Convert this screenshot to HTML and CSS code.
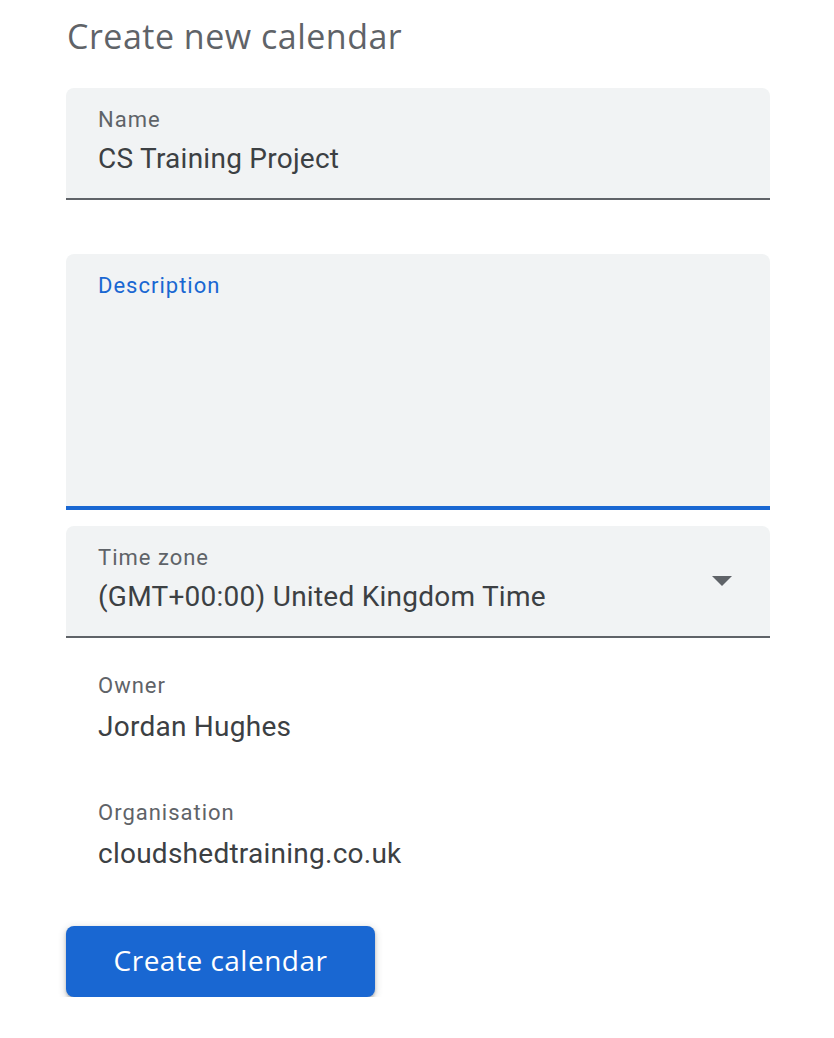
FILE: index.html
```html
<!DOCTYPE html>
<html lang="en">
<head>
<meta charset="utf-8">
<title>Create new calendar</title>
<link rel="stylesheet" href="styles.css">
</head>
<body>
<main class="page">
  <h1 class="title">Create new calendar</h1>

  <div class="field field-name">
    <div class="label">Name</div>
    <div class="value">CS Training Project</div>
  </div>

  <div class="field field-desc">
    <div class="label label-focus">Description</div>
    <div class="desc-area"></div>
  </div>

  <div class="field field-tz">
    <div class="tz-text">
      <div class="label">Time zone</div>
      <div class="value">(GMT+00:00) United Kingdom Time</div>
    </div>
    <svg class="caret" width="20" height="10" viewBox="0 0 20 10" aria-hidden="true"><path d="M0 0 L20 0 L10 10 Z" fill="#5f6368"/></svg>
  </div>

  <div class="info info-owner">
    <div class="label">Owner</div>
    <div class="value">Jordan Hughes</div>
  </div>

  <div class="info info-org">
    <div class="label">Organisation</div>
    <div class="value">cloudshedtraining.co.uk</div>
  </div>

  <button class="btn" type="button">Create calendar</button>
</main>
</body>
</html>
```

FILE: styles.css
```css
html, body {
  margin: 0;
  padding: 0;
  background: #ffffff;
}

.page {
  width: 704px;
  padding: 16px 0 0 66px;
  display: flex;
  flex-direction: column;
  align-items: flex-start;
  font-family: Roboto, "Liberation Sans", Arial, sans-serif;
}

.title {
  margin: 0 0 32px 1px;
  font-family: "Open Sans", Roboto, sans-serif;
  font-weight: 400;
  font-size: 34px;
  line-height: 40px;
  color: #5f6368;
  letter-spacing: 0.5px;
}

.field {
  box-sizing: border-box;
  width: 704px;
  background: #f1f3f4;
  border-radius: 8px 8px 0 0;
  border-bottom: 2px solid #5f6368;
  padding: 20px 32px 21px 32px;
}

.label {
  font-size: 22px;
  line-height: 24px;
  letter-spacing: 1px;
  color: #5f6368;
  margin-bottom: 9px;
}

.label-focus {
  color: #1967d2;
}

.value {
  font-size: 28px;
  line-height: 36px;
  letter-spacing: 0.25px;
  color: #3c4043;
}

.field-desc {
  margin-top: 54px;
  height: 256px;
  border-bottom: 4px solid #1967d2;
}

.field-tz {
  margin-top: 16px;
  display: flex;
  align-items: center;
  justify-content: space-between;
  padding-right: 38px;
}

.caret {
  display: block;
  flex: none;
}

.info {
  padding-left: 32px;
}

.info .label {
  margin-bottom: 11px;
}

.info-owner {
  margin-top: 36px;
}

.info-org {
  margin-top: 56px;
}

.btn {
  margin-top: 54px;
  box-sizing: border-box;
  width: 309px;
  height: 71px;
  border: none;
  border-radius: 8px;
  background: #1967d2;
  color: #ffffff;
  font-family: "Open Sans", Roboto, sans-serif;
  font-weight: 500;
  font-size: 28px;
  letter-spacing: 0.5px;
  padding: 0 0 4px 0;
  box-shadow: 0 2px 3px rgba(60, 64, 67, 0.3), 0 2px 6px 2px rgba(60, 64, 67, 0.15);
  cursor: pointer;
}
```
